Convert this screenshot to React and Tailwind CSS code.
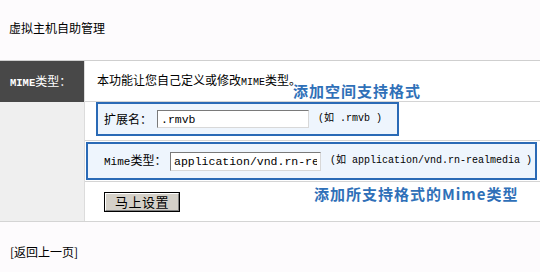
export default function App() {
  return (
    <div className="w-[540px] h-[272px] overflow-hidden bg-[#fdfbfd] text-black text-[12px] leading-[16px] font-['Noto_Sans_CJK_SC',sans-serif]">
      <div className="h-[61px] border-b border-[#cfcfcf] pl-[9px] pt-[20px]">虚拟主机自助管理</div>
      <div className="flex border-b border-[#d4d4d4]">
        <div className="w-[84px] shrink-0 flex flex-col">
          <div className="h-[41px] bg-[#484848] text-white flex items-center pl-[10px]">
            <span>
              <span className="font-['Liberation_Mono',monospace] text-[10.5px] font-bold">MIME</span>类型：
            </span>
          </div>
          <div className="flex-1 bg-[#efefef]" />
        </div>
        <div className="flex-1 border-l border-[#dcdcdc] bg-white relative">
          <div className="h-[41px] border-b border-[#d4d4d4] flex items-center pl-[12px]">
            <span>
              本功能让您自己定义或修改<span className="font-['Liberation_Mono',monospace] text-[10px]">MIME</span>类型。
            </span>
          </div>
          <div className="h-[39px] border-b border-[#d4d4d4] pl-[11px]">
            <div className="w-[303px] h-[34px] border-2 border-[#2a6ab6] bg-[#eef5fd] flex items-center pl-[6px]">
              <span className="w-[53px] shrink-0">扩展名：</span>
              <input
                readOnly
                value=".rmvb"
                className="w-[152px] h-[18px] shrink-0 bg-white border-t border-l border-t-[#7a7a7a] border-l-[#7a7a7a] border-b border-r border-b-[#d8d8d8] border-r-[#d8d8d8] px-[3px] py-0 outline-none font-['Liberation_Mono',monospace] text-[11.5px] text-black"
              />
              <span className="ml-[9px] font-['Liberation_Mono','Noto_Sans_CJK_SC',monospace] text-[10px] whitespace-pre">(如 .rmvb )</span>
            </div>
          </div>
          <div className="h-[41px] border-b border-[#d4d4d4] pl-[1px] pt-[1px]">
            <div className="w-[451px] h-[38px] border-2 border-[#2a6ab6] bg-[#eef5fd] flex items-center pl-[16px]">
              <span className="w-[66px] shrink-0">
                <span className="font-['Liberation_Mono',monospace] text-[11px]">Mime</span>类型：
              </span>
              <input
                readOnly
                value="application/vnd.rn-realmedia"
                className="w-[151px] h-[19px] shrink-0 bg-white border-t border-l border-t-[#7a7a7a] border-l-[#7a7a7a] border-b border-r border-b-[#d8d8d8] border-r-[#d8d8d8] px-[3px] py-0 outline-none font-['Liberation_Mono',monospace] text-[11.5px] text-black"
              />
              <span className="ml-[9px] font-['Liberation_Mono','Noto_Sans_CJK_SC',monospace] text-[10px] whitespace-pre">(如 application/vnd.rn-realmedia )</span>
            </div>
          </div>
          <div className="h-[39px] pl-[19px] pt-[10px]">
            <button className="w-[76px] h-[20px] border border-black bg-[#d4d0c8] p-0">
              <div className="w-full h-full border-t border-l border-t-white border-l-white border-b border-r border-b-[#808080] border-r-[#808080] flex items-center justify-center text-[13px] leading-[14px] tracking-[0.5px]">马上设置</div>
            </button>
          </div>
          <div className="absolute left-[208px] top-[22px] text-[15px] leading-[16px] font-bold tracking-[1px] text-[#2f70b8] whitespace-nowrap">添加空间支持格式</div>
          <div className="absolute left-[229px] top-[125px] text-[15px] leading-[16px] font-bold tracking-[1px] text-[#2f70b8] whitespace-nowrap">添加所支持格式的Mime类型</div>
        </div>
      </div>
      <div className="pl-[10px] pt-[22px]">[返回上一页]</div>
    </div>
  );
}
